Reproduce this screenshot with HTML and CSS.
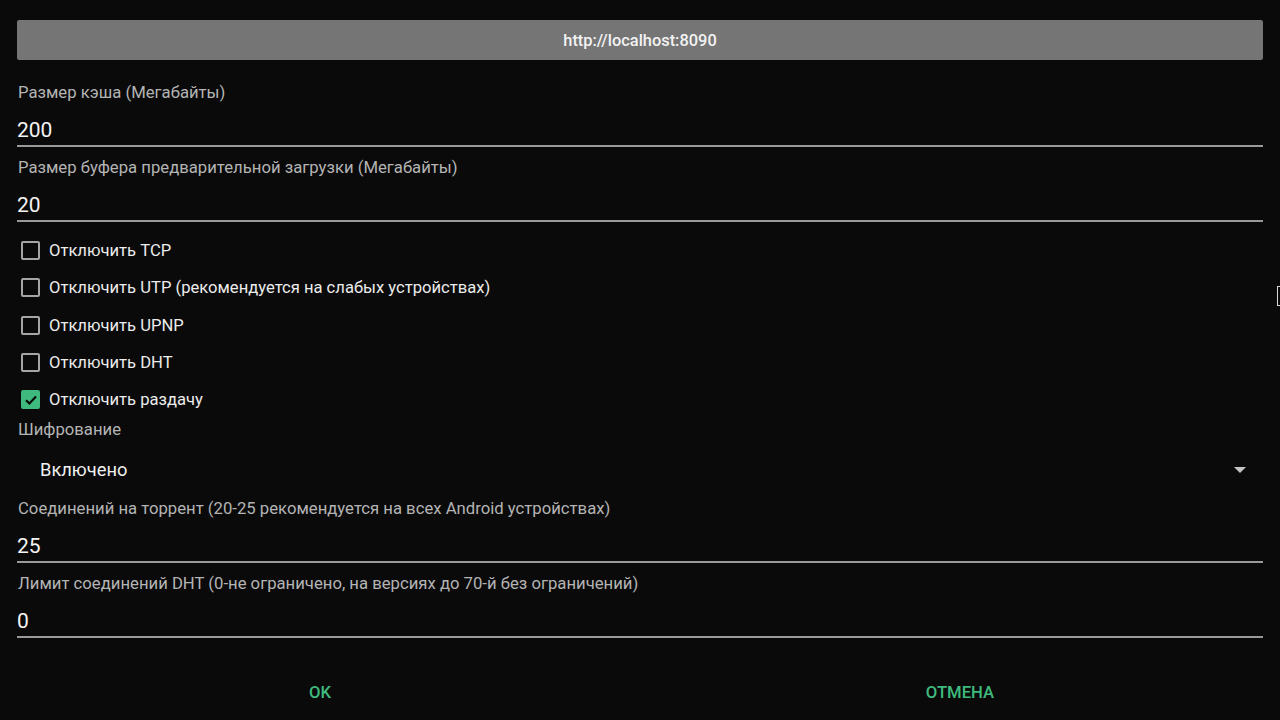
FILE: index.html
```html
<!DOCTYPE html>
<html>
<head>
    <title>Настройки</title>
    <link rel="stylesheet" href="styles.css">
</head>
<body>
    <div class="dialog">
        <div class="host-bar">http://localhost:8090</div>

        <div class="field first">
            <label class="field-label">Размер кэша (Мегабайты)</label>
            <div class="field-input">200</div>
        </div>
        <div class="field">
            <label class="field-label">Размер буфера предварительной загрузки (Мегабайты)</label>
            <div class="field-input">20</div>
        </div>

        <div class="checks">
            <div class="check-row"><span class="box"></span>Отключить TCP</div>
            <div class="check-row"><span class="box"></span>Отключить UTP (рекомендуется на слабых устройствах)</div>
            <div class="check-row"><span class="box"></span>Отключить UPNP</div>
            <div class="check-row"><span class="box"></span>Отключить DHT</div>
            <div class="check-row">
                <span class="box checked">
                    <svg width="14" height="14" viewBox="0 0 14 14"><path d="M2 7.2 L5.4 10.4 L12 3.6" fill="none" stroke="#0b0b0b" stroke-width="2.2"/></svg>
                </span>Отключить раздачу
            </div>
        </div>

        <div class="field-label plain">Шифрование</div>
        <div class="select-row">
            <span>Включено</span>
            <span class="arrow"></span>
        </div>

        <div class="field tight">
            <label class="field-label">Соединений на торрент (20-25 рекомендуется на всех Android устройствах)</label>
            <div class="field-input">25</div>
        </div>
        <div class="field">
            <label class="field-label">Лимит соединений DHT (0-не ограничено, на версиях до 70-й без ограничений)</label>
            <div class="field-input">0</div>
        </div>
    </div>

    <div class="actions">
        <div class="action">OK</div>
        <div class="action">ОТМЕНА</div>
    </div>

    <span class="edge-box"></span>
</body>
</html>
```

FILE: styles.css
```css
body {
    margin: 0;
    background: #0a0a0a;
    font-family: Roboto, "Noto Sans", Arial, sans-serif;
    color: #ececec;
    width: 1280px;
    height: 720px;
    overflow: hidden;
    position: relative;
}
.dialog {
    padding: 20px 17px 0 17px;
}
.host-bar {
    height: 40px;
    background-color: #757575;
    border-radius: 2px;
    color: #f2f2f2;
    font-size: 16.4px;
    font-weight: 500;
    display: flex;
    align-items: center;
    justify-content: center;
}
.field {
    margin-top: 9px;
}
.field.first {
    margin-top: 21px;
}
.field.tight {
    margin-top: 0;
}
.field-label {
    display: block;
    height: 24px;
    line-height: 24px;
    padding-left: 1px;
    font-size: 16.7px;
    color: #b4b4b4;
}
.field-input {
    padding-top: 10px;
    height: 30px;
    line-height: 30px;
    font-size: 21px;
    color: #f4f4f4;
    border-bottom: 2px solid #9a9a9a;
}
.checks {
    margin-top: 10px;
}
.check-row {
    height: 37.3px;
    display: flex;
    align-items: center;
    font-size: 16.6px;
    color: #ececec;
}
.box {
    width: 15px;
    height: 15px;
    border: 2px solid #a5a5a5;
    border-radius: 2px;
    margin: 0 9px 0 4px;
    display: flex;
    align-items: center;
    justify-content: center;
}
.box.checked {
    background-color: #3fba7e;
    border-color: #3fba7e;
}
.select-row {
    height: 55px;
    display: flex;
    align-items: center;
    justify-content: space-between;
    padding: 0 17px 0 23px;
    font-size: 18.3px;
    color: #f0f0f0;
}
.arrow {
    width: 0;
    height: 0;
    border-left: 6px solid transparent;
    border-right: 6px solid transparent;
    border-top: 6px solid #c4c4c4;
}
.actions {
    margin-top: 34px;
    display: flex;
}
.action {
    flex: 1;
    height: 40px;
    display: flex;
    align-items: center;
    justify-content: center;
    color: #3fba7e;
    font-size: 16.7px;
    font-weight: 500;
}
.edge-box {
    position: absolute;
    left: 1277px;
    top: 286px;
    width: 6px;
    height: 18px;
    border: 1px solid #d8d8d8;
}
```
